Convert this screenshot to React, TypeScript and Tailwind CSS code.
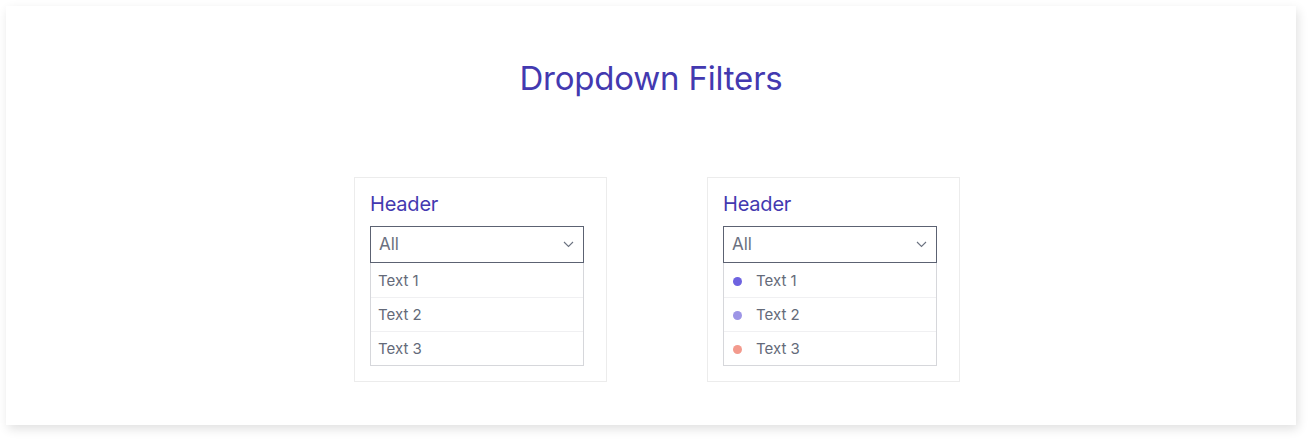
import React from "react";

type Option = { label: string; dot?: string };

const plainOptions: Option[] = [{ label: "Text 1" }, { label: "Text 2" }, { label: "Text 3" }];

const dotOptions: Option[] = [
  { label: "Text 1", dot: "bg-[#6e63e0]" },
  { label: "Text 2", dot: "bg-[#9d95e6]" },
  { label: "Text 3", dot: "bg-[#f39a8d]" },
];

function Chevron() {
  return (
    <svg width="11" height="7" viewBox="0 0 11 7" fill="none" className="text-[#6b7280]">
      <path d="M1 1l4.5 4.5L10 1" stroke="currentColor" strokeWidth="1.1" />
    </svg>
  );
}

function FilterCard({ options }: { options: Option[] }) {
  return (
    <div className="w-[253px] h-[205px] border border-[#ececec] bg-white pl-[15px] pt-[12px]">
      <h3 className="text-[20px] leading-[28px] text-[#4339b0] tracking-[-0.2px]">Header</h3>
      <div className="mt-[8px] w-[214px]">
        <div className="h-[37px] border border-[#5c6272] flex items-center justify-between pl-[8px] pr-[9px]">
          <span className="text-[17px] text-[#6b7080]">All</span>
          <Chevron />
        </div>
        <ul className="border border-t-0 border-[#d6d7db]">
          {options.map((opt, i) => (
            <li
              key={i}
              className={`h-[34px] flex items-center pl-[7px] pt-[2px] text-[15px] text-[#646a79] ${
                i > 0 ? "border-t border-[#f0f0f2]" : ""
              }`}
            >
              {opt.dot && <span className={`w-[9px] h-[9px] rounded-full ml-[2px] mr-[14px] ${opt.dot}`} />}
              {opt.label}
            </li>
          ))}
        </ul>
      </div>
    </div>
  );
}

export default function App() {
  return (
    <div className="w-[1310px] h-[439px] bg-white p-[6px] pr-[14px] pb-[14px] font-['Inter',sans-serif]">
      <div className="h-[419px] bg-white shadow-[2px_4px_10px_rgba(0,0,0,0.12)]">
        <h1 className="pt-[50px] text-center text-[33px] leading-[44px] text-[#4339b0] tracking-[-0.2px]">
          Dropdown Filters
        </h1>
        <div className="mt-[77px] flex justify-center gap-[100px] pl-[12px]">
          <FilterCard options={plainOptions} />
          <FilterCard options={dotOptions} />
        </div>
      </div>
    </div>
  );
}
